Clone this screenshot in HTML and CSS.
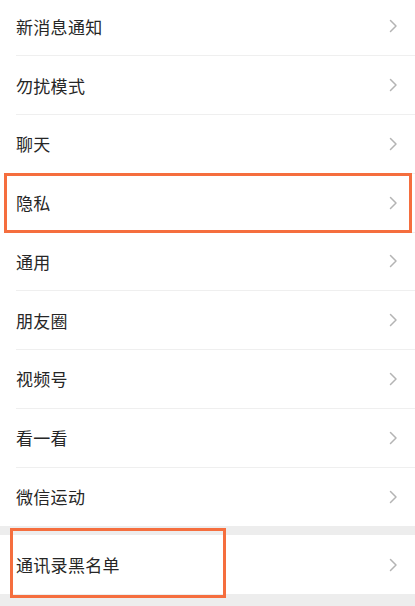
FILE: index.html
```html
<!DOCTYPE html>
<html lang="zh-CN">
<head>
<meta charset="utf-8">
<link rel="stylesheet" href="styles.css">
</head>
<body>
<div class="page">
  <div class="group first">
    <div class="row"><span class="label">新消息通知</span><svg class="chev" viewBox="0 0 9 14"><path d="M1.5 1.5 L7 7 L1.5 12.5"/></svg></div>
    <div class="row"><span class="label">勿扰模式</span><svg class="chev" viewBox="0 0 9 14"><path d="M1.5 1.5 L7 7 L1.5 12.5"/></svg></div>
    <div class="row"><span class="label">聊天</span><svg class="chev" viewBox="0 0 9 14"><path d="M1.5 1.5 L7 7 L1.5 12.5"/></svg></div>
    <div class="row"><span class="label">隐私</span><svg class="chev" viewBox="0 0 9 14"><path d="M1.5 1.5 L7 7 L1.5 12.5"/></svg></div>
    <div class="row"><span class="label">通用</span><svg class="chev" viewBox="0 0 9 14"><path d="M1.5 1.5 L7 7 L1.5 12.5"/></svg></div>
    <div class="row"><span class="label">朋友圈</span><svg class="chev" viewBox="0 0 9 14"><path d="M1.5 1.5 L7 7 L1.5 12.5"/></svg></div>
    <div class="row"><span class="label">视频号</span><svg class="chev" viewBox="0 0 9 14"><path d="M1.5 1.5 L7 7 L1.5 12.5"/></svg></div>
    <div class="row"><span class="label">看一看</span><svg class="chev" viewBox="0 0 9 14"><path d="M1.5 1.5 L7 7 L1.5 12.5"/></svg></div>
    <div class="row last"><span class="label">微信运动</span><svg class="chev" viewBox="0 0 9 14"><path d="M1.5 1.5 L7 7 L1.5 12.5"/></svg></div>
  </div>
  <div class="group">
    <div class="row last"><span class="label">通讯录黑名单</span><svg class="chev" viewBox="0 0 9 14"><path d="M1.5 1.5 L7 7 L1.5 12.5"/></svg></div>
  </div>
  <div class="mark mark-privacy"></div>
  <div class="mark mark-block"></div>
</div>
</body>
</html>
```

FILE: styles.css
```css
html, body {
  margin: 0;
  padding: 0;
  background: #ededed;
}
.page {
  position: relative;
  width: 415px;
  height: 606px;
  overflow: hidden;
  font-family: "Noto Sans CJK SC", "Noto Sans", sans-serif;
}
.group {
  background: #ffffff;
  margin-bottom: 9px;
}
.group.first {
  margin-top: -2.5px;
}
.row {
  height: 58.75px;
  box-sizing: border-box;
  margin-left: 16px;
  padding-right: 16px;
  display: flex;
  align-items: center;
  justify-content: space-between;
  border-bottom: 1px solid #efefef;
}
.row.last {
  border-bottom: none;
}
.label {
  font-size: 17px;
  color: #262626;
  letter-spacing: 0.3px;
}
.chev {
  width: 9px;
  height: 14px;
  fill: none;
  stroke: #b4b4b4;
  stroke-width: 1.5;
  stroke-linecap: round;
  stroke-linejoin: round;
  margin-right: 1px;
}
.mark {
  position: absolute;
  border: 3px solid #f56e3e;
  box-sizing: border-box;
}
.mark-privacy {
  left: 4px;
  top: 173px;
  width: 408px;
  height: 60px;
}
.mark-block {
  left: 10px;
  top: 528px;
  width: 216px;
  height: 70px;
}
```
